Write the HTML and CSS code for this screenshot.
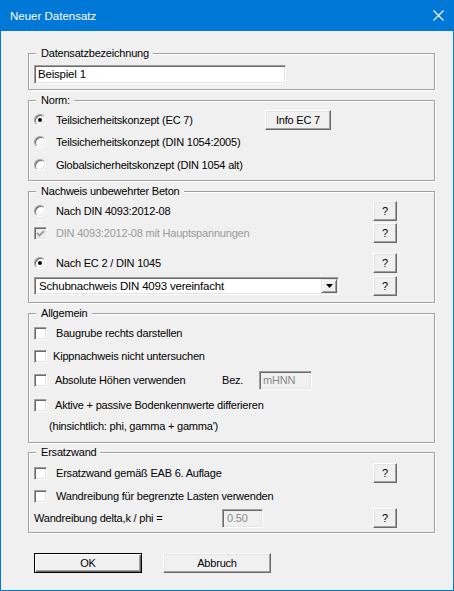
FILE: index.html
```html
<!DOCTYPE html>
<html lang="de">
<head>
<meta charset="utf-8">
<title>Neuer Datensatz</title>
<link rel="stylesheet" href="styles.css">
</head>
<body>
<div class="window">
  <div class="titlebar">
    <span class="title">Neuer Datensatz</span>
    <svg class="close" width="11" height="11" viewBox="0 0 11 11"><path d="M0.5 0.5 L10.5 10.5 M10.5 0.5 L0.5 10.5" stroke="#fff" stroke-width="1.1" fill="none"/></svg>
  </div>
  <div class="client">
    <div class="group g1">
      <div class="legend">Datensatzbezeichnung</div>
      <div class="sunken name-field">Beispiel 1</div>
    </div>

    <div class="group g2">
      <div class="legend">Norm:</div>
      <div class="row mt3">
        <span class="radio on"></span><span class="lbl gap10">Teilsicherheitskonzept (EC 7)</span>
        <span class="btn info">Info EC 7</span>
      </div>
      <div class="row mt2">
        <span class="radio"></span><span class="lbl gap10">Teilsicherheitskonzept (DIN 1054:2005)</span>
      </div>
      <div class="row mt3">
        <span class="radio"></span><span class="lbl gap10">Globalsicherheitskonzept (DIN 1054 alt)</span>
      </div>
    </div>

    <div class="group g3">
      <div class="legend">Nachweis unbewehrter Beton</div>
      <div class="row mt3">
        <span class="radio"></span><span class="lbl gap10">Nach DIN 4093:2012-08</span>
        <span class="btn q">?</span>
      </div>
      <div class="row mt2">
        <span class="check disabled"><svg width="9" height="9" viewBox="0 0 9 9"><path d="M1 4 L3.5 6.5 L8 2" stroke="#a0a0a0" stroke-width="2" fill="none"/></svg></span><span class="lbl gap9 dim">DIN 4093:2012-08 mit Hauptspannungen</span>
        <span class="btn q">?</span>
      </div>
      <div class="row mt10">
        <span class="radio on"></span><span class="lbl gap10">Nach EC 2 / DIN 1045</span>
        <span class="btn q">?</span>
      </div>
      <div class="row mt3">
        <div class="combo">
          <span class="combo-text">Schubnachweis DIN 4093 vereinfacht</span>
          <span class="drop"><svg width="7" height="4" viewBox="0 0 7 4"><polygon points="0,0 7,0 3.5,4" fill="#000"/></svg></span>
        </div>
        <span class="btn q">?</span>
      </div>
    </div>

    <div class="group g4">
      <div class="legend">Allgemein</div>
      <div class="row mt3">
        <span class="check"></span><span class="lbl gap9">Baugrube rechts darstellen</span>
      </div>
      <div class="row mt3">
        <span class="check"></span><span class="lbl gap6">Kippnachweis nicht untersuchen</span>
      </div>
      <div class="row mt4">
        <span class="check"></span><span class="lbl gap8 w-abs">Absolute Höhen verwenden</span>
        <span class="lbl w-bez">Bez.</span>
        <span class="sunken small-field hnn">mHNN</span>
      </div>
      <div class="row mt5">
        <span class="check"></span><span class="lbl gap8">Aktive + passive Bodenkennwerte differieren</span>
      </div>
      <div class="row mt1">
        <span class="lbl note">(hinsichtlich: phi, gamma + gamma')</span>
      </div>
    </div>

    <div class="group g5">
      <div class="legend">Ersatzwand</div>
      <div class="row mt4">
        <span class="check"></span><span class="lbl gap9">Ersatzwand gemäß EAB 6. Auflage</span>
        <span class="btn q">?</span>
      </div>
      <div class="row mt3">
        <span class="check"></span><span class="lbl gap9">Wandreibung für begrenzte Lasten verwenden</span>
      </div>
      <div class="row mt2">
        <span class="lbl w-delta">Wandreibung delta,k / phi =</span>
        <span class="sunken small-field delta">0.50</span>
        <span class="btn q">?</span>
      </div>
    </div>

    <div class="actions">
      <span class="btn default action">OK</span>
      <span class="btn action">Abbruch</span>
    </div>
  </div>
</div>
</body>
</html>
```

FILE: styles.css
```css
html, body {
  margin: 0;
  padding: 0;
  background: #f0f0f0;
}

body {
  font-family: "Liberation Sans", Arial, sans-serif;
  font-size: 11px;
  letter-spacing: -0.2px;
  color: #000;
}

.window {
  width: 454px;
  height: 591px;
  box-sizing: border-box;
  border: 1px solid #0078d7;
  border-top: 0;
  background: #f0f0f0;
}

.titlebar {
  height: 31px;
  background: #0078d7;
  display: flex;
  align-items: center;
  padding-left: 9px;
}

.title {
  color: #fff;
  font-size: 11.5px;
  letter-spacing: 0;
}

.close {
  margin-left: auto;
  margin-right: 9px;
  display: block;
}

.client {
  padding: 22px 0 0 27px;
}

.group {
  box-sizing: border-box;
  width: 407px;
  border: 1px solid #a0a0a0;
  box-shadow: inset 1px 1px 0 #fff, 1px 1px 0 #fff;
  padding: 0 0 0 5px;
}

.g1 { height: 37px; }
.g2 { height: 81px; margin-top: 10px; }
.g3 { height: 112px; margin-top: 10px; }
.g4 { height: 130px; margin-top: 10px; }
.g5 { height: 81px; margin-top: 9px; }

.legend {
  display: table;
  margin: -8px 0 0 2px;
  padding: 0 4px 0 5px;
  line-height: 14px;
  height: 14px;
  background: #f0f0f0;
  white-space: nowrap;
}

.row {
  display: flex;
  align-items: center;
  height: 20px;
  white-space: nowrap;
}

.mt1 { margin-top: 1px; }
.mt2 { margin-top: 2px; }
.mt3 { margin-top: 3px; }
.mt4 { margin-top: 4px; }
.mt5 { margin-top: 5px; }
.mt10 { margin-top: 10px; }

.lbl { line-height: 14px; }
.gap6 { margin-left: 6px; }
.gap8 { margin-left: 8px; }
.gap9 { margin-left: 9px; }
.gap10 { margin-left: 10px; }
.dim { color: #9a9a9a; }
.note { margin-left: 15px; }
.w-abs { width: 167px; }
.w-bez { width: 37px; }
.w-delta { width: 188px; }

/* sunken edit fields */
.sunken {
  box-sizing: border-box;
  border: 1px solid;
  border-color: #a0a0a0 #fff #fff #a0a0a0;
  box-shadow: inset 1px 1px 0 #696969, inset -1px -1px 0 #e3e3e3;
}

.name-field {
  margin-top: 5px;
  width: 252px;
  height: 19px;
  background: #fff;
  padding-left: 3px;
  line-height: 17px;
  font-size: 11.5px;
}

.small-field {
  height: 19px;
  line-height: 17px;
  background: #f0f0f0;
  color: #8a8a8a;
  padding-left: 3px;
}

.hnn { width: 53px; }
.delta { width: 41px; padding-left: 4px; }

/* buttons */
.btn {
  box-sizing: border-box;
  height: 20px;
  background: #f0f0f0;
  border: 1px solid;
  border-color: #fff #696969 #696969 #fff;
  box-shadow: inset -1px -1px 0 #a0a0a0, inset 1px 1px 0 #e3e3e3;
  display: flex;
  align-items: center;
  justify-content: center;
  flex: none;
  line-height: 14px;
}

.info {
  width: 66px;
  margin-left: auto;
  margin-right: 103px;
}

.q {
  width: 24px;
  margin-left: auto;
  margin-right: 37px;
}

.actions {
  display: flex;
  margin: 20px 0 0 6px;
  gap: 21px;
}

.action {
  width: 108px;
  height: 20px;
}

.btn.default {
  border-color: #000;
  box-shadow: inset 1px 1px 0 #fff, inset -1px -1px 0 #696969, inset -2px -2px 0 #a0a0a0;
}

/* radio buttons */
.radio {
  width: 12px;
  height: 12px;
  box-sizing: border-box;
  border-radius: 50%;
  border: 1px solid;
  border-color: #a0a0a0 #fff #fff #a0a0a0;
  box-shadow: inset 1px 1px 0 #696969, inset -1px -1px 0 #e3e3e3;
  background: #fff;
  flex: none;
  display: flex;
  align-items: center;
  justify-content: center;
}

.radio.on::after {
  content: "";
  width: 4px;
  height: 4px;
  border-radius: 50%;
  background: #000;
}

/* check boxes */
.check {
  width: 13px;
  height: 13px;
  box-sizing: border-box;
  border: 1px solid;
  border-color: #a0a0a0 #fff #fff #a0a0a0;
  box-shadow: inset 1px 1px 0 #696969, inset -1px -1px 0 #e3e3e3;
  background: #fff;
  flex: none;
  display: flex;
  align-items: center;
  justify-content: center;
}

.check.disabled {
  background: #f0f0f0;
}

.check svg { display: block; }

/* combo box */
.combo {
  box-sizing: border-box;
  width: 305px;
  height: 18px;
  display: flex;
  align-items: center;
  background: #fff;
  padding: 1px;
  border: 1px solid;
  border-color: #a0a0a0 #fff #fff #a0a0a0;
  box-shadow: inset 1px 1px 0 #696969, inset -1px -1px 0 #e3e3e3;
}

.combo-text {
  padding-left: 3px;
  line-height: 14px;
  font-size: 11.5px;
}

.drop {
  margin-left: auto;
  box-sizing: border-box;
  width: 16px;
  height: 14px;
  background: #f0f0f0;
  border: 1px solid;
  border-color: #e3e3e3 #696969 #696969 #e3e3e3;
  box-shadow: inset 1px 1px 0 #fff, inset -1px -1px 0 #a0a0a0;
  display: flex;
  align-items: center;
  justify-content: center;
}

.drop svg { display: block; }
```
